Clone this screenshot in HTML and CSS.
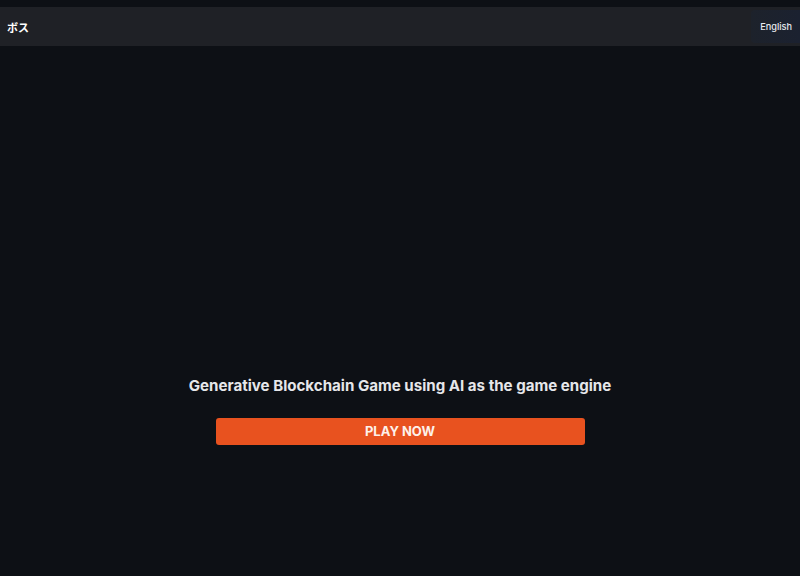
FILE: index.html
```html
<!DOCTYPE html>
<html lang="ja">
<head>
<meta charset="UTF-8">
<meta name="viewport" content="width=device-width, initial-scale=1.0">
<title>ボス</title>
<link rel="stylesheet" href="styles.css">
</head>
<body>
<header class="topbar">
  <div class="brand">ボス</div>
  <button class="lang">English</button>
</header>

<main class="hero">
  <h1>Generative Blockchain Game using AI as the game engine</h1>
  <a class="play" href="#">PLAY NOW</a>
</main>
</body>
</html>
```

FILE: styles.css
```css
html, body {
  margin: 0;
  height: 100%;
}
body {
  background-color: #0d1015;
  color: #e8e9ec;
  font-family: Inter, "Noto Sans CJK JP", sans-serif;
  padding-top: 7px;
  box-sizing: border-box;
  display: flex;
  flex-direction: column;
}
.topbar {
  height: 39px;
  background-color: #1f2126;
  display: flex;
  align-items: center;
  justify-content: space-between;
}
.brand {
  font-size: 11px;
  font-weight: 700;
  color: #ffffff;
  margin-left: 7px;
}
.lang {
  height: 33px;
  padding: 0 8px 0 9px;
  border: none;
  border-radius: 4px 0 0 4px;
  background: linear-gradient(90deg, #1d222b, #1b2130);
  color: #e8eaef;
  font-family: Inter, sans-serif;
  font-size: 9.2px;
  font-weight: 500;
}
.hero {
  flex: 1;
  display: flex;
  flex-direction: column;
  align-items: center;
  padding-top: 328px;
}
h1 {
  margin: 0;
  font-size: 15.1px;
  font-weight: 700;
  color: #e6e7ea;
  line-height: 24px;
}
.play {
  margin-top: 20px;
  width: 369px;
  height: 27px;
  line-height: 27px;
  background-color: #e8521f;
  border-radius: 3px;
  color: #fdf1ea;
  text-align: center;
  text-decoration: none;
  font-size: 13px;
  font-weight: 700;
}
```
